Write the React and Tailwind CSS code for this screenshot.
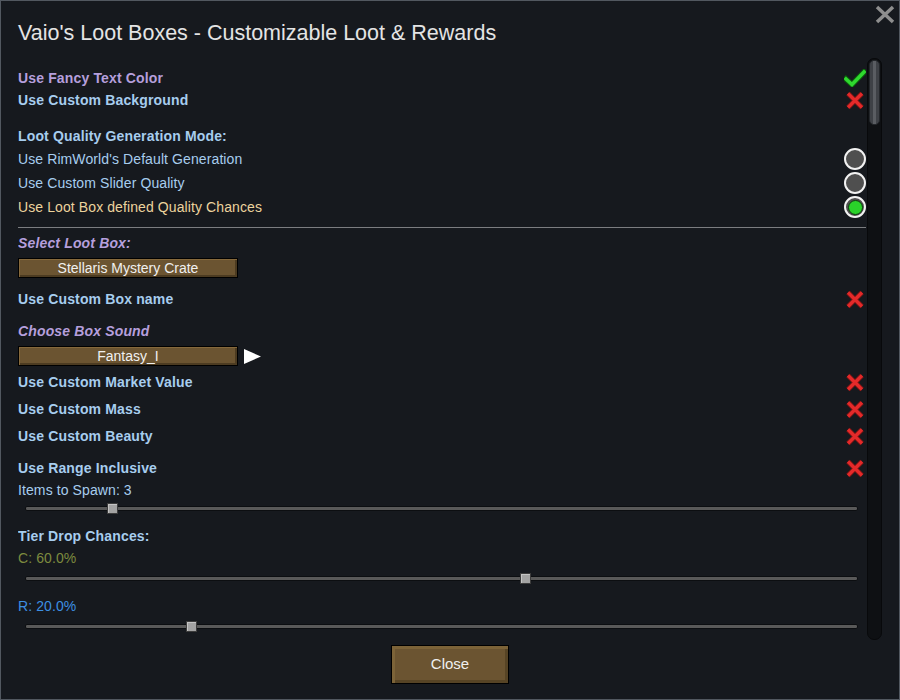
import React from 'react';

const PURPLE = 'text-[#b59fdc]';
const BLUE = 'text-[#a7cdee]';

const Check = () => (
	<svg width="22" height="18" viewBox="0 0 22 18">
		<polyline points="2,10 8,15.5 20,3" fill="none" stroke="#0b5e0b" strokeWidth="5.5" strokeLinecap="square" />
		<polyline points="2,10 8,15.5 20,3" fill="none" stroke="#2fd82f" strokeWidth="3.5" strokeLinecap="square" />
	</svg>
);

const Cross = () => (
	<svg width="22" height="21" viewBox="0 0 22 21">
		<path d="M4 3.5 L18 17.5 M18 3.5 L4 17.5" stroke="#7a1414" strokeWidth="5" />
		<path d="M4 3.5 L18 17.5 M18 3.5 L4 17.5" stroke="#e32a2a" strokeWidth="3.2" />
	</svg>
);

const Radio = ({ on }) => (
	<div className="w-[22px] h-[22px] rounded-full border-2 border-[#f2f2f2] bg-[#4f4f4f] flex items-center justify-center">
		{on && <div className="w-[15px] h-[15px] rounded-full bg-[#2ad22a] border border-[#0d3a0d]" />}
	</div>
);

const Row = ({ label, color = BLUE, bold = true, italic = false, icon, className = 'h-[22px]' }) => (
	<div className={`flex items-center justify-between ${className}`}>
		<span
			className={`text-[14px] ${color} ${bold ? 'font-bold tracking-[0.15px]' : 'tracking-[0.1px]'} ${italic ? 'italic' : ''}`}
		>
			{label}
		</span>
		{icon && <div className="w-[22px] flex justify-center">{icon}</div>}
	</div>
);

const Slider = ({ pct, className = '' }) => (
	<div className={`h-[14px] flex items-center ml-[7px] w-[833px] ${className}`}>
		<div className="relative w-full h-[5px] bg-[#595959] border border-[#0c0e11] rounded-[2px]">
			<div
				className="absolute top-[-4px] w-[11px] h-[11px] -ml-[5px] bg-[#a3a3a3] border border-[#3c3c3c] shadow-[inset_1px_1px_0_#c4c4c4]"
				style={{ left: `${pct}%` }}
			/>
		</div>
	</div>
);

const BrownButton = ({ children }) => (
	<div className="w-[220px] h-[20px] bg-[#6b5431] border border-black shadow-[inset_1px_1px_0_#86693c,inset_-2px_-2px_0_#4c3b21] flex items-center justify-center text-[14px] text-[#f0f0f0]">
		{children}
	</div>
);

export default function App() {
	return (
		<div className="w-[900px] h-[700px] bg-[#16191e] border border-[#525860] relative flex flex-col font-['Liberation_Sans',Arial,sans-serif]">
			{/* window close */}
			<svg className="absolute top-[4px] right-[4px]" width="20" height="19" viewBox="0 0 20 19">
				<path d="M2 2 L18 17 M18 2 L2 17" stroke="#8e8e8e" strokeWidth="3.5" />
			</svg>

			<div className="h-[57px] pl-[17px] pt-[20px]">
				<h1 className="text-[21.5px] leading-[24px] text-[#e4e4e4]">
					Vaio's Loot Boxes - Customizable Loot &amp; Rewards
				</h1>
			</div>

			<div className="flex h-[582px] pl-[17px]">
				<div className="w-[848px] flex flex-col overflow-hidden">
					<Row label="Use Fancy Text Color" color={PURPLE} icon={<Check />} className="mt-[9px] h-[22px]" />
					<Row label="Use Custom Background" icon={<Cross />} />

					<Row label="Loot Quality Generation Mode:" className="mt-[15px] h-[21px]" />
					<Row label="Use RimWorld's Default Generation" bold={false} icon={<Radio />} className="h-[24px]" />
					<Row label="Use Custom Slider Quality" bold={false} icon={<Radio />} className="h-[24px]" />
					<Row
						label="Use Loot Box defined Quality Chances"
						color="text-[#ecd39d]"
						bold={false}
						icon={<Radio on />}
						className="h-[24px]"
					/>

					<div className="mt-[8px] h-[1px] bg-[#7b7d80]" />

					<Row label="Select Loot Box:" color={PURPLE} italic className="mt-[4px] h-[22px]" />
					<div className="mt-[4px]">
						<BrownButton>Stellaris Mystery Crate</BrownButton>
					</div>

					<Row label="Use Custom Box name" icon={<Cross />} className="mt-[10px] h-[22px]" />

					<Row label="Choose Box Sound" color={PURPLE} italic className="mt-[10px] h-[22px]" />
					<div className="mt-[4px] flex items-center gap-[5px]">
						<BrownButton>Fantasy_I</BrownButton>
						<svg width="19" height="17" viewBox="0 0 19 17">
							<polygon points="1,1 18,8.5 1,16" fill="#ffffff" />
						</svg>
					</div>

					<Row label="Use Custom Market Value" icon={<Cross />} className="mt-[5px] h-[22px]" />
					<Row label="Use Custom Mass" icon={<Cross />} className="mt-[5px] h-[22px]" />
					<Row label="Use Custom Beauty" icon={<Cross />} className="mt-[5px] h-[22px]" />

					<Row label="Use Range Inclusive" icon={<Cross />} className="mt-[10px] h-[22px]" />
					<Row label="Items to Spawn: 3" bold={false} />
					<Slider pct={10.4} />

					<Row label="Tier Drop Chances:" className="mt-[10px] h-[22px]" />
					<Row label="C: 60.0%" color="text-[#7d8b3f]" bold={false} />
					<Slider pct={60.1} className="mt-[2px]" />
					<Row label="R: 20.0%" color="text-[#3d8fe2]" bold={false} className="mt-[10px] h-[22px]" />
					<Slider pct={19.9} className="mt-[2px]" />
				</div>

				{/* scrollbar */}
				<div className="ml-[1px] w-[15px] h-full bg-[#0e1013] border border-[#08090b] rounded-[7px] pt-[1px] flex justify-center">
					<div className="w-[11px] h-[65px] rounded-[5px] bg-[#3e4146] border border-[#23262a] flex justify-center">
						<div className="w-[3px] h-full bg-[#5a5d62]" />
					</div>
				</div>
			</div>

			<div className="flex justify-center pt-[5px]">
				<button className="w-[118px] h-[39px] bg-[#6b5431] border border-black shadow-[inset_3px_3px_0_#7c6338,inset_-3px_-3px_0_#574425] text-[15px] text-[#f0f0f0]">
					Close
				</button>
			</div>
		</div>
	);
}
